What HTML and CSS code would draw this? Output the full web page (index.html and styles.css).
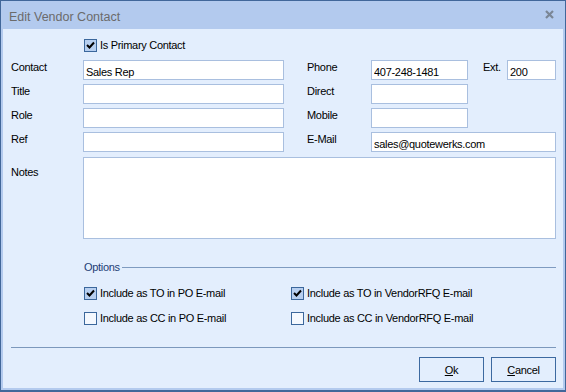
FILE: index.html
```html
<!DOCTYPE html>
<html lang="en">
<head>
  <meta charset="UTF-8" />
  <title>Edit Vendor Contact</title>
  <link rel="stylesheet" href="styles.css">
</head>
<body>
  <div class="window">
    <div class="titlebar">
      <span class="title">Edit Vendor Contact</span>
      <svg class="close" width="9" height="9" viewBox="0 0 9 9">
        <path d="M1 1 L8 8 M8 1 L1 8" stroke="#7a8695" stroke-width="2.2" fill="none"/>
      </svg>
    </div>

    <div class="client">
      <label class="check primary">
        <span class="box checked"><svg width="11" height="11" viewBox="0 0 11 11"><path d="M2 5 L4.5 7.5 L9 2.5" stroke="#000" stroke-width="2" fill="none"/></svg></span>
        Is Primary Contact
      </label>

      <div class="fields">
        <span class="lbl">Contact</span>
        <input class="in c-in" value="Sales Rep">
        <span class="lbl c-rlbl">Phone</span>
        <input class="in c-rin" value="407-248-1481">
        <span class="lbl c-elbl">Ext.</span>
        <input class="in c-ein" value="200">

        <span class="lbl">Title</span>
        <input class="in c-in" value="">
        <span class="lbl c-rlbl">Direct</span>
        <input class="in c-rin" value="">

        <span class="lbl">Role</span>
        <input class="in c-in" value="">
        <span class="lbl c-rlbl">Mobile</span>
        <input class="in c-rin" value="">

        <span class="lbl">Ref</span>
        <input class="in c-in" value="">
        <span class="lbl c-rlbl">E-Mail</span>
        <input class="in c-email" value="sales@quotewerks.com">
      </div>

      <div class="notes-row">
        <span class="lbl notes-lbl">Notes</span>
        <textarea class="notes"></textarea>
      </div>

      <div class="options">
        <div class="legend"><span>Options</span><span class="rule"></span></div>
        <div class="opt-grid">
          <label class="check"><span class="box checked"><svg width="11" height="11" viewBox="0 0 11 11"><path d="M2 5 L4.5 7.5 L9 2.5" stroke="#000" stroke-width="2" fill="none"/></svg></span>Include as TO in PO E-mail</label>
          <label class="check"><span class="box checked"><svg width="11" height="11" viewBox="0 0 11 11"><path d="M2 5 L4.5 7.5 L9 2.5" stroke="#000" stroke-width="2" fill="none"/></svg></span>Include as TO in VendorRFQ E-mail</label>
          <label class="check"><span class="box"></span>Include as CC in PO E-mail</label>
          <label class="check"><span class="box"></span>Include as CC in VendorRFQ E-mail</label>
        </div>
      </div>

      <div class="sep"></div>

      <div class="buttons">
        <button class="btn"><u>O</u>k</button>
        <button class="btn"><u>C</u>ancel</button>
      </div>
    </div>
  </div>
</body>
</html>
```

FILE: styles.css
```css
body {
  margin: 0;
  padding: 0;
  font-family: "Liberation Sans", Arial, sans-serif;
  font-size: 11px;
  letter-spacing: -0.3px;
  color: #000;
}
.window {
  width: 566px;
  height: 392px;
  box-sizing: border-box;
  background: #b3caee;
  border: 1px solid #41679a;
  border-bottom-width: 2px;
  padding: 0 2px 2px 2px;
  display: flex;
  flex-direction: column;
}
.titlebar {
  height: 28px;
  display: flex;
  justify-content: space-between;
  align-items: flex-start;
  padding: 0 9px 0 6px;
}
.title {
  font-size: 12.5px;
  letter-spacing: 0;
  color: #6b6b6b;
  line-height: 15px;
  margin-top: 9px;
}
.close {
  margin-top: 9px;
}
.client {
  height: 359px;
  box-sizing: border-box;
  background: #e3eefd;
  padding: 10px 7px 6px 8px;
  display: flex;
  flex-direction: column;
}
.check {
  display: flex;
  align-items: center;
  height: 13px;
  line-height: 13px;
  white-space: nowrap;
}
.box {
  width: 13px;
  height: 13px;
  box-sizing: border-box;
  border: 1px solid #3b679c;
  background: #f4f8fe;
  margin-right: 3px;
  display: flex;
  align-items: center;
  justify-content: center;
  flex: none;
}
.box.checked {
  background: #b7cff0;
}
.primary {
  margin-left: 73px;
}
.fields {
  margin-top: 8px;
  display: grid;
  grid-template-columns: 72px 201px 23px 64px 97px 15px 24px 49px;
  grid-auto-rows: 20px;
  row-gap: 4px;
}
.lbl {
  grid-column: 1;
  line-height: 13px;
  padding-top: 1px;
}
.c-rlbl { grid-column: 4; }
.c-elbl { grid-column: 7; }
.in {
  box-sizing: border-box;
  height: 20px;
  margin: 0;
  border: 1px solid #a9bfdf;
  background: #fff;
  font: inherit;
  letter-spacing: inherit;
  color: #000;
  padding: 3px 2px 0 2px;
  outline: none;
}
.c-in { grid-column: 2; }
.c-rin { grid-column: 5; }
.c-ein { grid-column: 8; }
.c-email { grid-column: 5 / 9; }
.notes-row {
  margin-top: 5px;
  display: flex;
}
.notes-lbl {
  width: 72px;
  padding-top: 9px;
}
.notes {
  width: 473px;
  height: 82px;
  box-sizing: border-box;
  margin: 0;
  border: 1px solid #a9bfdf;
  background: #fff;
  resize: none;
}
.options {
  margin-left: 73px;
  margin-top: 22px;
}
.legend {
  display: flex;
  align-items: center;
  line-height: 13px;
  color: #1d3d75;
}
.rule {
  flex: 1;
  height: 1px;
  background: #7f9bc0;
  margin-left: 2px;
}
.opt-grid {
  margin-top: 13px;
  display: grid;
  grid-template-columns: 207px auto;
  row-gap: 12px;
}
.sep {
  margin-top: 22px;
  height: 1px;
  background: #7c98bc;
}
.buttons {
  margin-top: 9px;
  display: flex;
  justify-content: flex-end;
  gap: 7px;
}
.btn {
  width: 65px;
  height: 25px;
  border: 1px solid #3c69a0;
  background: #e3eefd;
  font: inherit;
  letter-spacing: inherit;
  color: #000;
  padding: 0;
}
```
